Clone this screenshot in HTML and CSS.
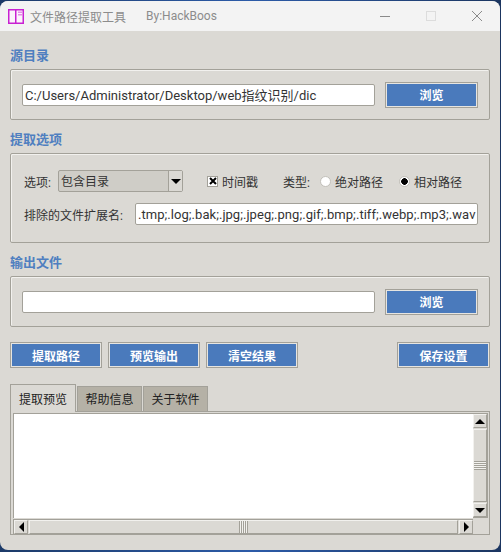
FILE: index.html
```html
<!DOCTYPE html>
<html lang="zh-CN">
<head>
    <meta charset="UTF-8">
    <title>文件路径提取工具</title>
    <link rel="stylesheet" href="styles.css">
</head>
<body>
    <div class="window">
        <div class="titlebar">
            <svg class="app-icon" width="16" height="15" viewBox="0 0 16 15">
                <rect width="16" height="15" fill="#c821d2"/>
                <rect x="1.5" y="1.5" width="5.5" height="12" fill="#fbf3fb"/>
                <rect x="8.5" y="1.5" width="6" height="12" fill="#fbf3fb"/>
                <rect x="10" y="2.5" width="4" height="1.5" fill="#e58be8"/>
                <rect x="10" y="5" width="4" height="1.5" fill="#e58be8"/>
            </svg>
            <span class="app-name">文件路径提取工具</span>
            <span class="app-author">By:HackBoos</span>
            <div class="window-controls">
                <svg width="10" height="1" viewBox="0 0 10 1"><rect width="10" height="1" fill="#8a8a8a"/></svg>
                <svg width="10" height="10" viewBox="0 0 10 10"><rect x="0.5" y="0.5" width="9" height="9" fill="none" stroke="#dcdcdc"/></svg>
                <svg width="10" height="10" viewBox="0 0 10 10"><path d="M0 0L10 10M10 0L0 10" stroke="#8a8a8a" fill="none"/></svg>
            </div>
        </div>

        <div class="content">
            <h3 class="section-title">源目录</h3>
            <div class="group path-group">
                <div class="field path-field">C:/Users/Administrator/Desktop/web指纹识别/dic</div>
                <button class="btn browse-btn">浏览</button>
            </div>

            <h3 class="section-title">提取选项</h3>
            <div class="group options-group">
                <div class="options-row">
                    <span class="opt-label">选项:</span>
                    <div class="select">
                        <span class="select-value">包含目录</span>
                        <span class="select-arrow"><i class="tri tri-down"></i></span>
                    </div>
                    <span class="checkbox">
                        <svg width="8" height="8" viewBox="0 0 8 8"><path d="M1 1L7 7M7 1L1 7" stroke="#000" stroke-width="2"/></svg>
                    </span>
                    <span class="check-label">时间戳</span>
                    <span class="type-label">类型:</span>
                    <span class="radio"></span>
                    <span class="radio-label">绝对路径</span>
                    <span class="radio radio-on"></span>
                    <span class="radio-label">相对路径</span>
                </div>
                <div class="options-row exclude-row">
                    <span class="exclude-label">排除的文件扩展名:</span>
                    <div class="field exclude-field">.tmp;.log;.bak;.jpg;.jpeg;.png;.gif;.bmp;.tiff;.webp;.mp3;.wav</div>
                </div>
            </div>

            <h3 class="section-title">输出文件</h3>
            <div class="group path-group">
                <div class="field path-field"></div>
                <button class="btn browse-btn">浏览</button>
            </div>

            <div class="actions">
                <button class="btn action-btn">提取路径</button>
                <button class="btn action-btn">预览输出</button>
                <button class="btn action-btn">清空结果</button>
                <button class="btn save-btn">保存设置</button>
            </div>

            <div class="tabs">
                <div class="tab tab-active">提取预览</div>
                <div class="tab">帮助信息</div>
                <div class="tab">关于软件</div>
            </div>
            <div class="pane">
                <div class="pane-top">
                    <div class="text-area"></div>
                    <div class="vscroll">
                        <span class="sb-btn"><i class="tri tri-up"></i></span>
                        <span class="vthumb"><i class="vgrip"></i></span>
                        <span class="sb-btn"><i class="tri tri-down"></i></span>
                    </div>
                </div>
                <div class="hscroll">
                    <span class="sb-btn"><i class="tri tri-left"></i></span>
                    <span class="hthumb"><i class="hgrip"></i></span>
                    <span class="sb-btn"><i class="tri tri-right"></i></span>
                </div>
            </div>
        </div>
    </div>
</body>
</html>
```

FILE: styles.css
```css
* {
    box-sizing: border-box;
}
html, body {
    margin: 0;
    height: 100%;
}
body {
    background: linear-gradient(90deg, #1c3a68, #2c5ba8 50%, #1b3560);
    font-family: Roboto, "Noto Sans CJK SC", sans-serif;
    font-size: 12px;
    color: #333;
    overflow: hidden;
    padding-top: 1px;
}
.window {
    width: 500px;
    height: 549px;
    background: #dbd9d4;
    border-radius: 8px;
    overflow: hidden;
}
.titlebar {
    height: 30px;
    background: #f3f3f3;
    display: flex;
    align-items: center;
    padding-left: 8px;
    color: #8c8c8c;
}
.app-icon {
    margin-right: 6px;
}
.app-name {
    margin-right: 20px;
}
.window-controls {
    margin-left: auto;
    display: flex;
    align-items: center;
    gap: 36px;
    padding-right: 18px;
}
.content {
    padding: 0 10px;
}
.section-title {
    margin: 0 0 4px;
    padding-top: 11px;
    height: 29px;
    font-size: 13px;
    line-height: 18px;
    font-weight: 700;
    color: #4f7fc0;
}
.titlebar + .content .section-title:first-child {
    padding-top: 16px;
    height: 34px;
}
.group {
    border: 1px solid #a3a199;
    border-radius: 2px;
    box-shadow: inset 1px 1px 0 #f2f1ee;
}
.path-group {
    height: 51px;
    display: flex;
    align-items: center;
    gap: 10px;
    padding: 0 11px;
}
.field {
    height: 22px;
    line-height: 22px;
    background: #fff;
    border: 1px solid #a3a199;
    border-radius: 2px;
    padding: 0 2px;
    font-size: 13px;
    white-space: nowrap;
    overflow: hidden;
}
.path-field {
    width: 353px;
}
.exclude-field {
    letter-spacing: 0.04px;
}
.btn {
    height: 26px;
    width: 93px;
    padding: 0;
    background: #4a7abc;
    border: 1px solid #a3a199;
    outline: 1px solid #e6e5e1;
    outline-offset: -2px;
    color: #fff;
    font: 700 12px Roboto, "Noto Sans CJK SC", sans-serif;
}
.options-group {
    height: 90px;
    padding: 16px 11px 0;
}
.options-row {
    display: flex;
    align-items: center;
    height: 22px;
    white-space: nowrap;
}
.opt-label {
    margin-left: 2px;
    width: 34px;
}
.select {
    width: 125px;
    height: 22px;
    display: flex;
    background: #cfcdc7;
    border: 1px solid #a3a199;
    border-radius: 2px;
    margin-right: 24px;
}
.select-value {
    flex: 1;
    padding-left: 2px;
    line-height: 22px;
}
.select-arrow {
    width: 14px;
    background: #dbd9d4;
    border-left: 1px solid #a3a199;
    display: flex;
    align-items: center;
    justify-content: center;
}
.tri {
    display: block;
    width: 0;
    height: 0;
    border-style: solid;
    border-color: transparent;
}
.tri-down {
    border-width: 5px 5px 0;
    border-top-color: #000;
}
.tri-up {
    border-width: 0 5px 5px;
    border-bottom-color: #000;
}
.tri-left {
    border-width: 5px 5px 5px 0;
    border-right-color: #000;
}
.tri-right {
    border-width: 5px 0 5px 5px;
    border-left-color: #000;
}
.checkbox {
    flex: none;
    width: 11px;
    height: 11px;
    background: #fff;
    border: 1px solid #a3a199;
    display: flex;
    align-items: center;
    justify-content: center;
    margin-right: 4px;
}
.check-label {
    margin-right: 25px;
}
.type-label {
    margin-right: 10px;
}
.radio {
    flex: none;
    width: 11px;
    height: 11px;
    border-radius: 50%;
    background: #fff;
    border: 1px solid #c2c0ba;
    margin-right: 4px;
}
.radio-label {
    margin-right: 16px;
}
.radio-on {
    background: radial-gradient(circle, #000 3px, #fff 3.6px);
}
.exclude-row {
    margin-top: 11px;
}
.exclude-label {
    flex: none;
    margin-left: 2px;
    width: 111px;
}
.exclude-field {
    flex: none;
    width: 343px;
}
.actions {
    display: flex;
    gap: 6px;
    margin-top: 15px;
}
.action-btn {
    width: 92px;
}
.save-btn {
    margin-left: auto;
}
.tabs {
    display: flex;
    align-items: flex-end;
    gap: 1px;
    height: 27px;
    margin-top: 16px;
    color: #222;
}
.tab {
    width: 65px;
    height: 25px;
    line-height: 26px;
    text-align: center;
    background: #b5b1a6;
    border: 1px solid #a3a199;
    border-bottom: none;
}
.tab-active {
    position: relative;
    width: 66px;
    height: 28px;
    margin-bottom: -1px;
    line-height: 31px;
    background: #dbd9d4;
}
.pane {
    height: 124px;
    border: 1px solid #a3a199;
    padding: 1px 0 0 2px;
}
.pane-top {
    display: flex;
    height: 105px;
}
.text-area {
    width: 460px;
    background: #fff;
    border-left: 1px solid #a3a199;
    border-top: 1px solid #a3a199;
}
.vscroll {
    width: 15px;
    display: flex;
    flex-direction: column;
    gap: 1px;
    border: 1px solid #a3a199;
    border-width: 1px 1px 1px 0;
}
.sb-btn {
    flex: none;
    width: 14px;
    height: 14px;
    background: #dbd9d4;
    border: 1px solid #a3a199;
    border-top-color: #f2f1ee;
    border-left-color: #f2f1ee;
    display: flex;
    align-items: center;
    justify-content: center;
}
.vthumb {
    flex: 1;
    background: #dbd9d4;
    border: 1px solid #a3a199;
    border-top-color: #f2f1ee;
    border-left-color: #f2f1ee;
    display: flex;
    align-items: center;
}
.vgrip {
    display: block;
    width: 100%;
    height: 9px;
    background: repeating-linear-gradient(180deg, #a3a199 0 1px, #f2f1ee 1px 2px);
}
.hscroll {
    display: flex;
    gap: 1px;
    width: 460px;
    height: 15px;
    margin-top: 1px;
    border: 1px solid #a3a199;
    border-width: 1px 0 0 1px;
}
.hthumb {
    flex: 1;
    background: #dbd9d4;
    border: 1px solid #a3a199;
    border-top-color: #f2f1ee;
    border-left-color: #f2f1ee;
    display: flex;
    align-items: center;
    justify-content: center;
}
.hgrip {
    display: block;
    width: 9px;
    height: 100%;
    background: repeating-linear-gradient(90deg, #a3a199 0 1px, #f2f1ee 1px 2px);
}
```
